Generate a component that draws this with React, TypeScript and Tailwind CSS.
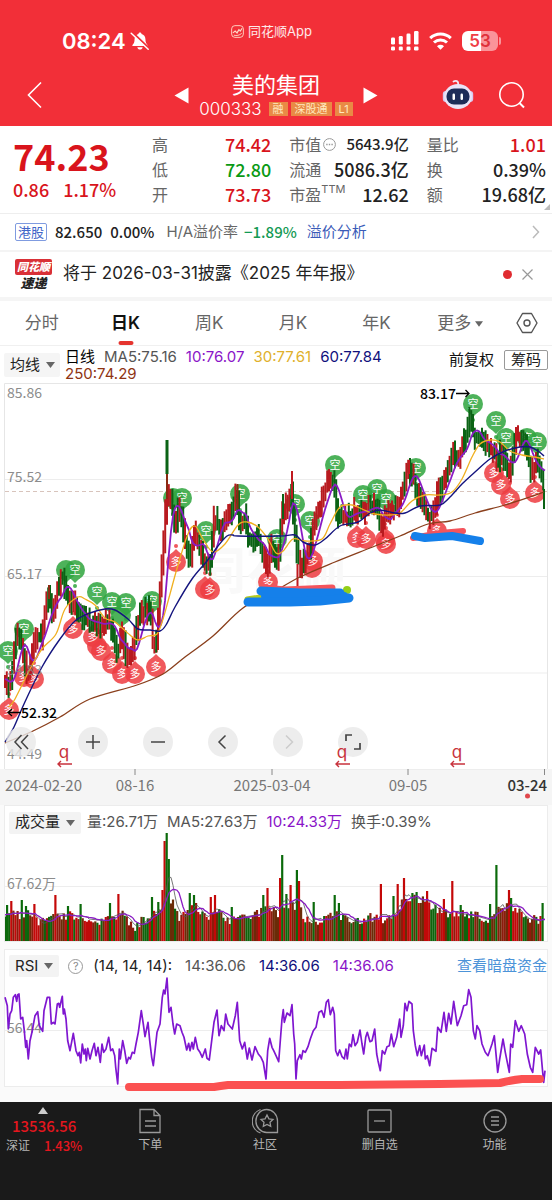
import React from "react";

type Pt = [number, number];

const CJK = "font-['Inter','Noto_Sans_CJK_SC',sans-serif]";
const DIN = "font-['Noto_Sans_CJK_SC',sans-serif]";

/* ---------- chart data ---------- */

const price: Pt[] = [
  [5, 680], [8, 690], [12, 678], [14, 660], [18, 630], [23, 650], [28, 676], [31, 665], [33, 650], [37, 637], [42, 640],
  [46, 612], [49, 596], [53, 613], [58, 592], [63, 577], [67, 595], [72, 605], [74, 603], [80, 618], [87, 622], [97, 624],
  [103, 627], [108, 620], [113, 632], [118, 656], [123, 635], [127, 660], [133, 652], [137, 630], [142, 610], [145, 615],
  [148, 608], [152, 625], [154, 650], [157, 640], [160, 600], [163, 560], [165, 535], [167, 495], [171, 492], [174, 515],
  [176, 532], [178, 508], [182, 520], [185, 540], [188, 554], [191, 558], [194, 533], [197, 542], [202, 553], [205, 562],
  [208, 568], [211, 564], [213, 543], [215, 515], [218, 523], [222, 530], [227, 517], [230, 519], [233, 515], [237, 492],
  [239, 520], [242, 530], [245, 517], [248, 537], [252, 545], [257, 538], [262, 550], [265, 560], [268, 573], [270, 548],
  [275, 557], [279, 564], [282, 515], [287, 507], [292, 490], [294, 515], [297, 550], [301, 567], [307, 557], [310, 550],
  [315, 523], [320, 510], [325, 493], [330, 478], [335, 487], [337, 510], [340, 521], [347, 517], [354, 513], [362, 513],
  [372, 507], [378, 510], [381, 530], [385, 520], [390, 513], [395, 510], [400, 503], [405, 483], [409, 468], [414, 480],
  [419, 497], [424, 507], [429, 518], [435, 510], [439, 493], [445, 483], [454, 453], [458, 460], [465, 443], [471, 418],
  [475, 440], [485, 443], [492, 450], [499, 463], [502, 450], [509, 475], [513, 460], [516, 440], [520, 440], [525, 442],
  [529, 460], [533, 475], [537, 463], [544, 480],
];

const ma30: Pt[] = [
  [9, 708], [15, 700], [30, 670], [42, 650], [56, 635], [65, 610], [78, 598], [85, 600], [95, 606], [105, 619], [115, 623],
  [130, 636], [138, 641], [148, 637], [157, 635], [163, 620], [170, 595], [178, 566], [188, 535], [195, 527], [203, 540],
  [213, 553], [225, 545], [238, 526], [247, 523], [258, 528], [268, 540], [276, 554], [283, 552], [293, 540], [305, 542],
  [322, 540], [330, 525], [340, 508], [352, 506], [362, 510], [375, 515], [390, 516], [400, 514], [412, 502], [425, 496],
  [440, 496], [452, 493], [462, 480], [472, 458], [480, 445], [490, 441], [500, 443], [510, 452], [522, 456], [535, 458], [544, 460],
];

const ma60: Pt[] = [
  [5, 743], [14, 728], [24, 705], [42, 668], [60, 640], [75, 622], [90, 614], [105, 610], [115, 611], [128, 620], [138, 630],
  [150, 631], [160, 632], [166, 626], [175, 608], [192, 580], [207, 562], [218, 547], [227, 537], [233, 536], [238, 537],
  [280, 537], [295, 536], [303, 543], [315, 546], [325, 540], [340, 527], [358, 523], [370, 514], [380, 511], [395, 514],
  [405, 514], [420, 507], [440, 506], [450, 498], [462, 485], [475, 473], [490, 460], [505, 452], [520, 448], [530, 448],
  [538, 452], [544, 457],
];

const ma250: Pt[] = [
  [5, 744], [33, 732], [60, 718], [90, 700], [137, 686], [163, 675], [185, 658], [213, 637], [243, 609], [275, 592],
  [300, 578], [335, 563], [370, 549], [400, 537], [428, 525], [450, 522], [475, 514], [505, 506], [530, 498], [544, 493],
];

const shortMarks: Pt[] = [
  [8, 652], [24, 630], [75, 571], [112, 603], [97, 593], [126, 604], [152, 602], [182, 499],
  [206, 532], [240, 495], [277, 540], [295, 505], [310, 522], [335, 466], [363, 496], [377, 490], [386, 500], [416, 469],
  [473, 405], [496, 422], [506, 439], [527, 439], [537, 443],
];

const longMarks: Pt[] = [
  [9, 711], [24, 678], [34, 680], [73, 630], [93, 638], [101, 652], [112, 665], [122, 675], [135, 675], [156, 668],
  [176, 563], [210, 591], [268, 583], [313, 562], [357, 539], [366, 540], [386, 545], [437, 532],
  [494, 474], [501, 486], [510, 500], [535, 494],
];

const hiddenShort: Pt[] = [[66, 571], [121, 616], [173, 499]];
const hiddenLong: Pt[] = [[97, 647], [205, 590], [312, 569], [385, 541]];

const volumeBase: Pt[] = [
  [5, 916], [30, 916], [40, 926], [50, 918], [70, 917], [85, 920], [105, 922], [115, 917], [125, 917], [133, 929], [150, 917],
  [160, 912], [168, 893], [173, 905], [180, 920], [195, 908], [205, 919], [218, 912], [228, 923], [240, 918], [260, 915],
  [272, 908], [280, 916], [290, 906], [300, 910], [308, 924], [325, 920], [340, 916], [355, 924], [370, 919], [380, 920],
  [390, 920], [400, 906], [408, 900], [420, 902], [430, 905], [440, 914], [450, 917], [470, 916], [490, 922], [500, 910],
  [515, 908], [525, 920], [545, 923],
];

const volumeSpikes: Pt[] = [
  [7, 906], [12, 902], [21, 901], [27, 907], [34, 905], [56, 896], [68, 907], [81, 905], [111, 904], [119, 895], [152, 898],
  [159, 903], [163, 891], [165, 842], [167, 834], [169, 860], [190, 894], [194, 896], [210, 898], [215, 896], [231, 908],
  [263, 896], [268, 889], [281, 879], [283, 856], [287, 895], [291, 886], [296, 871], [298, 882], [314, 903], [335, 896],
  [339, 904], [380, 885], [393, 897], [398, 885], [403, 879], [405, 877], [413, 894], [417, 893], [427, 892], [444, 900],
  [453, 882], [460, 906], [491, 905], [497, 866], [510, 891], [512, 899], [543, 904],
];

const risingSpikes = [56, 119, 163, 165, 268, 281, 291, 298, 380, 398, 403, 405, 427, 444, 453, 510, 215, 210, 12, 34];

const rsiLeft: Pt[] = [
  [15, 160], [22, 185], [25, 255], [30, 210], [35, 200], [40, 160], [46, 152], [50, 172], [53, 152], [57, 150], [62, 225],
  [68, 220], [73, 260], [77, 310], [80, 290], [85, 345], [90, 290], [97, 260], [105, 215], [113, 203], [118, 245], [128, 262],
  [132, 200], [142, 160], [149, 160], [154, 240], [160, 235], [165, 240], [172, 180], [176, 178], [179, 190], [187, 157],
  [190, 210], [193, 195], [198, 225], [203, 290], [210, 320], [220, 268], [228, 320], [234, 335], [238, 325], [242, 357],
  [247, 300], [252, 330], [256, 315], [259, 350], [263, 313], [270, 345], [276, 320], [283, 298], [288, 335], [294, 310],
  [301, 355], [306, 300], [311, 325], [318, 315], [326, 280], [332, 320], [338, 315], [344, 335], [347, 370], [353, 420],
  [358, 315], [361, 345], [368, 290], [374, 320], [380, 358], [386, 340], [391, 345], [397, 325], [403, 328], [408, 300],
  [415, 265], [424, 200], [430, 240], [435, 278], [444, 235], [449, 290], [455, 340], [460, 365], [465, 320], [471, 265],
  [480, 240], [487, 160], [491, 138], [495, 150], [501, 102], [507, 205], [513, 190], [519, 240], [524, 270], [530, 240],
  [540, 245], [546, 265], [552, 280], [560, 318], [566, 298], [570, 320], [576, 295], [580, 315], [586, 280], [593, 315],
  [600, 325], [607, 340], [616, 315], [621, 343], [628, 348], [635, 290], [642, 235], [651, 198], [657, 275], [664, 245],
  [672, 260], [677, 210], [684, 240], [697, 255], [706, 215], [712, 175], [719, 290], [727, 315], [734, 295], [742, 345],
  [748, 312], [756, 348], [765, 308], [775, 330], [783, 340], [790, 355], [798, 405], [803, 320], [809, 283],
];

const rsiRight: Pt[] = [
  [0, 310], [5, 320], [12, 335], [20, 353], [25, 290], [30, 225], [34, 197], [37, 235], [45, 207], [54, 215], [60, 182],
  [65, 270], [68, 300], [72, 405], [76, 350], [84, 332], [88, 345], [93, 320], [100, 325], [108, 308], [115, 285], [124, 260],
  [132, 250], [141, 205], [149, 200], [156, 220], [163, 175], [169, 167], [175, 212], [182, 190], [187, 210], [191, 320],
  [197, 335], [203, 318], [210, 338], [217, 345], [222, 315], [226, 345], [232, 300], [238, 308], [243, 272], [249, 305],
  [256, 295], [264, 258], [270, 300], [275, 330], [281, 280], [286, 265], [294, 293], [300, 290], [308, 255], [314, 330],
  [318, 350], [325, 380], [331, 320], [338, 330], [345, 308], [352, 305], [358, 270], [365, 308], [374, 280], [383, 225],
  [387, 280], [394, 245], [399, 178], [405, 200], [411, 172], [420, 180], [424, 260], [430, 305], [436, 335], [443, 305],
  [448, 335], [457, 303], [460, 345], [466, 335], [473, 365], [480, 313], [492, 322], [497, 250], [507, 265], [516, 205],
  [523, 262], [530, 208], [537, 240], [545, 172], [556, 245], [567, 215], [575, 185], [584, 182], [590, 137], [597, 160],
  [604, 260], [610, 285], [615, 245], [623, 260], [630, 300], [640, 325], [648, 335], [660, 300], [667, 275], [677, 385],
  [683, 345], [693, 285], [700, 325], [712, 385], [716, 300], [722, 310], [730, 230], [740, 262], [748, 245], [758, 270],
  [766, 330], [775, 370], [782, 385], [790, 310], [800, 330], [806, 318], [812, 385], [815, 415], [819, 380],
];

const rsi: Pt[] = [
  ...rsiLeft.map(([x, y]): Pt => [x / 3, y / 3 + 945]),
  ...rsiRight.map(([x, y]): Pt => [x / 3 + 272, y / 3 + 945]),
];

/* ---------- helpers ---------- */

const rand = (i: number) => {
  const s = Math.sin(i * 127.1 + 11.7) * 43758.5453;
  return s - Math.floor(s);
};

const at = (pts: Pt[], x: number) => {
  if (x <= pts[0][0]) return pts[0][1];
  for (let i = 1; i < pts.length; i++) {
    if (x <= pts[i][0]) {
      const [x0, y0] = pts[i - 1];
      const [x1, y1] = pts[i];
      return y0 + ((y1 - y0) * (x - x0)) / (x1 - x0);
    }
  }
  return pts[pts.length - 1][1];
};

const line = (pts: Pt[]) => pts.map(([x, y], i) => `${i ? "L" : "M"}${x.toFixed(1)} ${y.toFixed(1)}`).join("");

const curve = (p: Pt[]) => {
  let d = `M${p[0][0]} ${p[0][1]}`;
  for (let i = 0; i < p.length - 1; i++) {
    const a = p[Math.max(0, i - 1)];
    const b = p[i];
    const c = p[i + 1];
    const e = p[Math.min(p.length - 1, i + 2)];
    d += `C${b[0] + (c[0] - a[0]) / 6} ${b[1] + (c[1] - a[1]) / 6} ${c[0] - (e[0] - b[0]) / 6} ${c[1] - (e[1] - b[1]) / 6} ${c[0]} ${c[1]}`;
  }
  return d;
};

const average = (f: (x: number) => number, back: number) => {
  const out: Pt[] = [];
  for (let x = 5; x <= 545; x += 2) {
    let s = 0;
    for (let k = 0; k <= back; k++) s += f(Math.max(5, x - k));
    out.push([x, s / (back + 1)]);
  }
  return out;
};

const candles = Array.from({ length: 300 }, (_, i) => {
  const x = 5 + i * 1.8;
  const a = at(price, x - 1);
  const b = at(price, x + 1);
  const falling = at(price, x + 2) > at(price, x - 2);
  const shift = (rand(i) - 0.5) * 5;
  return {
    x,
    top: Math.min(a, b) + shift - 4 - rand(i + 900) * 9,
    bottom: Math.max(a, b) + shift + 4 + rand(i + 1300) * 9,
    green: rand(i + 400) < (falling ? 0.72 : 0.28),
  };
});

const volume = Array.from({ length: 257 }, (_, i) => {
  const x = 5 + i * 2.1;
  const r = rand(i + 50);
  const spike = volumeSpikes.find(([sx]) => Math.abs(sx - x) < 1.05);
  const y = spike ? spike[1] : at(volumeBase, x) + (r - 0.55) * 10;
  const c = rand(i + 777);
  const up = spike ? risingSpikes.includes(spike[0]) : false;
  const fill = spike ? (up ? "#c40808" : "#0b6a0b") : c < 0.34 ? "#c00a0a" : c < 0.55 ? "#8c1c0c" : c < 0.8 ? "#6b2c08" : "#0e640c";
  return { x, y, fill };
});

const volAt = (x: number) => {
  const s = volumeSpikes.find(([sx]) => Math.abs(sx - x) < 1);
  return s ? s[1] : at(volumeBase, x);
};

function Mark({ x, y, long, plain }: { x: number; y: number; long?: boolean; plain?: boolean }) {
  const s = long ? -1 : 1;
  const fill = long ? "#ee3d42" : "#31a640";
  return (
    <g opacity="0.86">
      <path d={`M${x - 5} ${y + 8 * s}L${x} ${y + 13 * s}L${x + 5} ${y + 8 * s}Z`} fill={fill} />
      <circle cx={x} cy={y} r="10" fill={fill} />
      <circle cx={x} cy={y + 16 * s} r="2" fill={fill} />
      {!plain && (
        <text x={x} y={y + 4} textAnchor="middle" fill="#fff" className="text-[11px]">
          {long ? "多" : "空"}
        </text>
      )}
    </g>
  );
}

/* ---------- sections ---------- */

function StatusBar() {
  return (
    <div className="grid grid-cols-[1fr_auto_1fr] items-center pt-[23px] pr-[51px] pl-[42px]">
      <div className="flex h-9 items-center gap-1 pl-5">
        <span className="text-[22px] leading-6 font-semibold">08:24</span>
        <svg width="20" height="20" viewBox="0 0 20 20" aria-label="静音">
          <path d="M10 1.5c.9 0 1.5.6 1.5 1.400 2.400.6 3.900 2.600 3.900 5.100 0 3.600 1.100 4.800 2.100 5.900.4.5.1 1.100-.5 1.100H3c-.6 0-.9-.6-.5-1.100 1-1.100 2.100-2.300 2.100-5.900 0-2.500 1.500-4.500 3.900-5.100 0-.8.6-1.400 1.500-1.400Z" fill="#fff" />
          <path d="M7.300 16.200h5.400c-.3 1.500-1.400 2.300-2.700 2.300s-2.400-.8-2.700-2.300Z" fill="#fff" />
          <path d="M2.200 1.200 19 17.200" stroke="#f22f38" strokeWidth="2.200" />
          <path d="M1.200 2.200 18.200 18.200" stroke="#fff" strokeWidth="1.500" strokeLinecap="round" />
        </svg>
      </div>
      <div className="flex items-center gap-1 pb-5 text-[13px] leading-4 text-white/90">
        <svg width="13" height="13" viewBox="0 0 14 14" fill="none" stroke="#ffd9c8">
          <rect x="0.700" y="0.700" width="12.600" height="12.600" rx="3.500" />
          <path d="M2 8.500 4.500 6.500 6.500 8.500 8.500 5 10 6.500 12 3.500" strokeWidth="1.300" />
          <path d="M3 11c3 .8 6 .2 8.500-2" />
        </svg>
        <span>同花顺App</span>
      </div>
      <div className="flex items-center justify-end gap-[10px]">
        <svg width="28" height="20" viewBox="0 0 28 20" fill="#fff" aria-label="信号">
          <rect x="0" y="6.500" width="4" height="7" rx="1.200" />
          <rect x="7.800" y="5" width="4" height="8.500" rx="1.200" />
          <rect x="15.500" y="2.500" width="4" height="11" rx="1.200" />
          <rect x="23" y="0" width="4.500" height="13.500" rx="1.200" />
          <rect x="0" y="15.500" width="4" height="4" rx="1.200" />
          <rect x="7.800" y="15.500" width="4" height="4" rx="1.200" />
          <rect x="15.500" y="15.500" width="4" height="4" rx="1.200" />
          <rect x="23" y="15.500" width="4.500" height="4" rx="1.200" />
        </svg>
        <svg width="23" height="18" viewBox="0 0 23 18" fill="none" stroke="#fff" strokeWidth="3" aria-label="无线网络">
          <path d="M1.200 6.200C7 .6 16 .6 21.800 6.200" />
          <path d="M5 10.500c3.700-3.400 9.300-3.400 13 0" />
          <path d="M8 14.200 11.500 17.800 15 14.200c-2-1.800-5-1.800-7 0Z" fill="#fff" stroke="none" />
        </svg>
        <div className="flex items-center gap-px">
          <div className="flex h-5 w-9 items-center justify-center rounded-[6px] bg-[linear-gradient(90deg,#fff_53%,#fa9499_53%)] text-[17px] leading-5 font-semibold">
            <span className="text-[#ef3e46]">5</span>
            <span className="text-[#e0313b]">3</span>
          </div>
          <span className="h-2 w-[2px] rounded-r-full bg-[#fa9499]" />
        </div>
      </div>
    </div>
  );
}

function TitleBar() {
  return (
    <div className="grid grid-cols-[1fr_auto_1fr] items-center px-6 pt-3 pb-[7px]">
      <button type="button" aria-label="返回" className="w-6">
        <svg width="22" height="30" viewBox="0 0 22 30" fill="none" stroke="#fff" strokeWidth="1.600">
          <path d="M17 2.500 4.500 15 17 27.500" />
        </svg>
      </button>
      <div className="flex items-center gap-[10px]">
        <button type="button" aria-label="上一只">
          <svg width="15" height="17" viewBox="0 0 15 17">
            <path d="M0.500 8.500 14.500 0.500v16Z" fill="#fff" />
          </svg>
        </button>
        <div className="flex flex-col items-center">
          <h1 className="text-[22px] leading-7">美的集团</h1>
          <div className="flex items-center gap-[3px] leading-5">
            <span className="mr-1 text-[17px] font-light">000333</span>
            <span className="bg-[#e98a45] px-1 text-[11px] leading-[14px] text-[#ffe9c0]">融</span>
            <span className="bg-[#e98a45] px-1 text-[11px] leading-[14px] text-[#ffe9c0]">深股通</span>
            <span className="bg-[#e98a45] px-1 text-[11px] leading-[14px] text-[#ffe9c0]">L1</span>
          </div>
        </div>
        <button type="button" aria-label="下一只">
          <svg width="15" height="17" viewBox="0 0 15 17">
            <path d="M14.500 8.500.5.500v16Z" fill="#fff" />
          </svg>
        </button>
      </div>
      <div className="flex items-center justify-end gap-6 pr-[2px]">
        <button type="button" aria-label="智能助手">
          <svg width="32" height="32" viewBox="0 0 32 32">
            <path d="M11.500 2.500c2.500-1.500 5-.5 4.800 3" fill="none" stroke="#f3e5f2" strokeWidth="1.800" strokeLinecap="round" />
            <rect x="0.800" y="12" width="6" height="11" rx="3" fill="#d9c9f0" />
            <rect x="25.200" y="12" width="6" height="11" rx="3" fill="#d9c9f0" />
            <ellipse cx="16" cy="17.500" rx="14" ry="12.500" fill="#e9e4f8" />
            <rect x="4.500" y="9.500" width="23" height="16" rx="7.500" fill="#1d2c58" />
            <rect x="10.500" y="14.500" width="2.500" height="6.500" rx="1.200" fill="#fff" />
            <rect x="18.500" y="14.500" width="2.500" height="6.500" rx="1.200" fill="#fff" />
          </svg>
        </button>
        <button type="button" aria-label="搜索">
          <svg width="28" height="28" viewBox="0 0 28 28" fill="none" stroke="#fff" strokeWidth="1.600">
            <circle cx="13.500" cy="13.500" r="11.700" />
            <path d="M21.500 22 26 26.500" strokeWidth="2" />
          </svg>
        </button>
      </div>
    </div>
  );
}

function Stat({ label, value, tone, small }: { label: React.ReactNode; value: string; tone: string; small?: boolean }) {
  return (
    <div className="flex h-[25px] items-center justify-between whitespace-nowrap">
      <dt className="flex items-center text-base text-[#666]">{label}</dt>
      <dd className={`${DIN} font-medium ${small ? "text-[15px]" : "text-[18px]"} ${tone}`}>{value}</dd>
    </div>
  );
}

const RED = "text-[#d9141c]";
const GREEN = "text-[#0a9a14]";
const BLACK = "text-[#222]";

function Quote() {
  return (
    <section className="relative grid grid-cols-[121px_1fr_1fr_1fr] gap-x-[18px] bg-white pt-[6px] pr-[6px] pb-[6px] pl-[13px]">
      <div className={`${DIN} ${RED}`}>
        <p className="pt-px text-[36px] leading-[44px] font-bold">74.23</p>
        <p className="flex gap-[14px] text-[18px] leading-6 font-medium">
          <span>0.86</span>
          <span>1.17%</span>
        </p>
      </div>
      <dl>
        <Stat label="高" value="74.42" tone={RED} />
        <Stat label="低" value="72.80" tone={GREEN} />
        <Stat label="开" value="73.73" tone={RED} />
      </dl>
      <dl>
        <Stat
          label={
            <>
              市值
              <svg width="13" height="13" viewBox="0 0 13 13" fill="none" stroke="#999" className="ml-[2px]">
                <circle cx="6.500" cy="6.500" r="5.900" />
                <path d="M3.200 6.500h1.400M5.800 6.500h1.400M8.400 6.500h1.400" strokeWidth="1.300" />
              </svg>
            </>
          }
          value="5643.9亿"
          tone={BLACK}
          small
        />
        <Stat label="流通" value="5086.3亿" tone={BLACK} />
        <Stat label={<>市盈<sup className="text-[11px]">TTM</sup></>} value="12.62" tone={BLACK} />
      </dl>
      <dl>
        <Stat label="量比" value="1.01" tone={RED} />
        <Stat label="换" value="0.39%" tone={BLACK} />
        <Stat label="额" value="19.68亿" tone={BLACK} />
      </dl>
      <svg width="6" height="6" viewBox="0 0 6 6" className="absolute right-[2px] bottom-[3px]">
        <path d="M6 0v6H0Z" fill="#bbb" />
      </svg>
    </section>
  );
}

function HongKong() {
  return (
    <section className="flex h-[37px] items-center border-t border-[#eee] bg-white pr-3 pl-[15px] text-[15px]">
      <span className="mr-2 rounded-[2px] border border-[#7f9be0] px-[2px] text-[13px] leading-4 text-[#4166c8]">港股</span>
      <span className={`${DIN} mr-2 text-[15px] font-medium ${BLACK}`}>82.650</span>
      <span className={`${DIN} mr-3 text-[15px] font-medium ${BLACK}`}>0.00%</span>
      <span className="mr-[6px] text-[#666]">H/A溢价率</span>
      <span className={`${DIN} mr-[10px] text-[15px] font-medium text-[#139a54]`}>−1.89%</span>
      <a href="#premium" className="text-[#3a5bb8]">溢价分析</a>
      <svg width="8" height="14" viewBox="0 0 8 14" fill="none" stroke="#bbb" strokeWidth="1.500" className="ml-auto">
        <path d="M1 1 6.500 7 1 13" />
      </svg>
    </section>
  );
}

function News() {
  return (
    <section className="flex h-[47px] items-center border-t-2 border-[#f4f4f4] bg-white pr-[19px] pl-[15px]">
      <div className="mr-[11px] flex w-[37px] flex-col items-center font-black italic">
        <span className="flex h-4 w-full items-center justify-center rounded-[2px] bg-[#d93037] text-[11px] leading-4 text-white">同花顺</span>
        <span className="text-[13px] leading-4 text-[#222]">速递</span>
      </div>
      <p className="pb-px text-[17px] text-[#222]">将于 2026-03-31披露《2025 年年报》</p>
      <span className="mr-[10px] ml-auto size-[9px] rounded-full bg-[#e02b30]" />
      <button type="button" aria-label="关闭">
        <svg width="11" height="11" viewBox="0 0 11 11" stroke="#999" strokeWidth="1.200">
          <path d="M.5.500 10.500 10.500M10.500.500.5 10.500" />
        </svg>
      </button>
    </section>
  );
}

function Caret({ small }: { small?: boolean }) {
  return (
    <svg width={small ? 8 : 9} height="6" viewBox="0 0 9 6">
      <path d="M0 0h9L4.500 6Z" fill="#666" />
    </svg>
  );
}

function PeriodTabs() {
  return (
    <nav className="flex h-[49px] items-center border-t-4 border-b border-t-[#f5f5f5] border-b-[#f0f0f0] bg-white pr-[14px] text-[17px] text-[#666]">
      {["分时", "日K", "周K", "月K", "年K"].map((t) => (
        <button
          key={t}
          type="button"
          className={t === "日K" ? "relative h-full flex-1 pt-[2px] font-semibold text-[#111]" : "h-full flex-1 pt-[2px]"}
        >
          {t}
          {t === "日K" && <span className="absolute bottom-0 left-1/2 h-1 w-[15px] -translate-x-1/2 rounded-full bg-[#e5342f]" />}
        </button>
      ))}
      <button type="button" className="flex h-full flex-1 items-center justify-center gap-1 pt-[2px]">
        更多
        <Caret small />
      </button>
      <button type="button" aria-label="设置" className="ml-[14px]">
        <svg width="22" height="22" viewBox="0 0 22 22" fill="none" stroke="#555" strokeWidth="1.400">
          <path d="M6.500 1.500h9L21 11l-5.500 9.500h-9L1 11Z" strokeLinejoin="round" />
          <circle cx="11" cy="11" r="3" />
        </svg>
      </button>
    </nav>
  );
}

function AverageLegend() {
  return (
    <div className="flex h-[37px] items-start bg-white pr-1 pl-1 text-[15px] leading-[18px]">
      <button type="button" className="mt-[7px] mr-[5px] flex h-6 shrink-0 items-center gap-[6px] rounded-[2px] bg-[#f5f5f5] pr-[5px] pl-[6px] text-[#222]">
        均线
        <Caret />
      </button>
      <div className="flex flex-1 flex-wrap gap-x-[9px] pt-[2px] leading-[17px]">
        <span className="text-black">日线</span>
        <span className="text-[#555]">MA5:75.16</span>
        <span className="text-[#8a14c8]">10:76.07</span>
        <span className="text-[#e0b02c]">30:77.61</span>
        <span className="text-[#10107c]">60:77.84</span>
        <span className="basis-full text-[#8e3413]">250:74.29</span>
      </div>
      <button type="button" className="mt-1 mr-[10px] h-5 text-[#111]">前复权</button>
      <button type="button" className="mt-1 h-5 rounded-[2px] border border-[#999] px-[6px] leading-4 text-[#222]">筹码</button>
    </div>
  );
}

const TOOL = "flex size-[30px] items-center justify-center rounded-full bg-[#e9e9e9]/80";

function PriceChart() {
  return (
    <section className="relative bg-white">
      <svg viewBox="0 384 552 422" className="block w-full overflow-visible" fill="none">
        <rect x="0" y="770" width="552" height="36" fill="#f5f5f5" />
        <path d="M4.500 770V384.500H547.500V770" stroke="#e6e6e6" />
        <path d="M5 480.500H547M5 577.500H547M5 674H547M5 770.500H547" stroke="#ededed" />
        <text x="196" y="590" fill="#f9f9f9" className="text-[50px] font-bold">同花顺</text>
        <path d="M5 492.500H547" stroke="#d8c4bc" strokeDasharray="4 3" />
        {hiddenLong.map(([x, y], i) => <Mark key={i} x={x} y={y} long plain />)}
        {hiddenShort.map(([x, y], i) => <Mark key={i} x={x} y={y} plain />)}
        {longMarks.map(([x, y], i) => <Mark key={i} x={x} y={y} long />)}
        {shortMarks.map(([x, y], i) => <Mark key={i} x={x} y={y} />)}
        {candles.map((c, i) => (
          <path key={i} d={`M${c.x} ${c.top}V${c.bottom}`} stroke={c.green ? "#0b6315" : "#b81a1f"} strokeWidth="2" />
        ))}
        <path d="M167 441V475" stroke="#0b6315" strokeWidth="3" />
        <path d="M167 475V500M237.500 485V510M49 586V600" stroke="#8a2a12" strokeWidth="2" />
        <path d="M292 472V500M297.500 565V588M409 461V475M516 428V450" stroke="#c01a20" strokeWidth="2" />
        <path d="M283 495V520M544 490V510" stroke="#0b6315" strokeWidth="2" />
        <path d={line(average((x) => at(price, x), 11))} stroke="#8a1cc4" strokeWidth="1.800" />
        <path d={curve(ma30)} stroke="#f0b020" strokeWidth="1.300" />
        <path d={curve(ma60)} stroke="#14147e" strokeWidth="1.400" />
        <path d={curve(ma250)} stroke="#8a3f1c" strokeWidth="1.300" />

        <g strokeLinecap="round" strokeLinejoin="round">
          <path d="M265 589 285 591 332 589" stroke="#f4545c" strokeWidth="7" />
          <circle cx="347" cy="591" r="4" fill="#94cf18" />
          <path d="M247 600 260 598" stroke="#b5cc20" strokeWidth="5" />
          <path d="M261 592 300 594 340 594" stroke="#1580ea" strokeWidth="9" />
          <path d="M265 597H344" stroke="#1580ea" strokeWidth="8" />
          <path d="M248 603 290 603 320 602 349 599" stroke="#1580ea" strokeWidth="9" />
          <path d="M413 539 440 534 463 532" stroke="#f4545c" strokeWidth="6" />
          <path d="M415 537 425 539 452 537 480 542" stroke="#1580ea" strokeWidth="8" />
        </g>

        <g fill="#8c8c8c" className="font-['Noto_Sans_CJK_SC',sans-serif] text-[14px]">
          <text x="7" y="399">85.86</text>
          <text x="7" y="483">75.52</text>
          <text x="7" y="580">65.17</text>
          <text x="7" y="676" opacity="0.8">54.83</text>
          <text x="7" y="760">44.49</text>
        </g>
        <g fill="#777" className="font-['Noto_Sans_CJK_SC',sans-serif] text-[15px]">
          <text x="5" y="792">2024-02-20</text>
          <text x="135" y="792" textAnchor="middle">08-16</text>
          <text x="272" y="792" textAnchor="middle">2025-03-04</text>
          <text x="408" y="792" textAnchor="middle">09-05</text>
          <text x="547" y="792" textAnchor="end" fill="#333" className="font-medium">03-24</text>
        </g>
        <g fill="#000" className="font-['Noto_Sans_CJK_SC',sans-serif] text-[14px] font-medium">
          <text x="21" y="719">52.32</text>
          <text x="456" y="400" textAnchor="end">83.17</text>
        </g>
        <path d="M21 713.500H8M12 710 8 713.500 12 717M456 394.500H469M465.500 391 469 394.500 465.500 398" stroke="#000" strokeWidth="1.300" />
        <path d="M135 770V776M272 770V776M408 770V776M544.500 770V776" stroke="#888" />
        <circle cx="527.500" cy="797" r="2.500" fill="#e0474c" />
      </svg>

      <div className="absolute top-[344px] left-[6px] flex gap-[35px]">
        <button type="button" aria-label="收起" className={`${TOOL} mr-[7px]`}>
          <svg width="16" height="18" viewBox="0 0 16 18" fill="none" stroke="#444" strokeWidth="1.500">
            <path d="M8.500 2 2 9l6.500 7M15 2 8.500 9 15 16" />
          </svg>
        </button>
        <button type="button" aria-label="放大" className={TOOL}>
          <svg width="16" height="16" viewBox="0 0 16 16" stroke="#444" strokeWidth="1.500"><path d="M1 8h14M8 1v14" /></svg>
        </button>
        <button type="button" aria-label="缩小" className={TOOL}>
          <svg width="16" height="16" viewBox="0 0 16 16" stroke="#444" strokeWidth="1.500"><path d="M1 8h14" /></svg>
        </button>
        <button type="button" aria-label="左移" className={TOOL}>
          <svg width="16" height="16" viewBox="0 0 16 16" fill="none" stroke="#444" strokeWidth="1.500"><path d="M10.500 1.500 4 8l6.500 6.500" /></svg>
        </button>
        <button type="button" aria-label="右移" className={TOOL}>
          <svg width="16" height="16" viewBox="0 0 16 16" fill="none" stroke="#ccc" strokeWidth="1.500"><path d="M6 1.500 12.500 8 6 14.500" /></svg>
        </button>
        <button type="button" aria-label="全屏" className={TOOL}>
          <svg width="16" height="16" viewBox="0 0 16 16" fill="none" stroke="#444" strokeWidth="1.700"><path d="M1 7V1h6M15 9v6H9" /></svg>
        </button>
      </div>

      <svg viewBox="0 384 552 422" className="pointer-events-none absolute inset-0 w-full" fill="none">
        {[64, 342, 457].map((x) => (
          <g key={x}>
            <text x={x} y="759" textAnchor="middle" fill="#c8323c" className="text-[17px]">q</text>
            <path d={`M${x + 8} 765H${x - 6}M${x - 3} 762L${x - 6} 765L${x - 3} 768`} stroke="#c8323c" strokeWidth="1.400" />
          </g>
        ))}
      </svg>
    </section>
  );
}

function VolumeChart() {
  return (
    <section className="mx-1 border border-[#ececec] bg-white">
      <div className="flex h-[33px] items-center text-[15px] text-[#555]">
        <button type="button" className="mr-[6px] ml-1 flex h-[22px] items-center gap-[6px] rounded-[2px] bg-[#f3f3f3] px-[6px] text-[#222]">
          成交量
          <Caret />
        </button>
        <span className="mr-[9px]">量:26.71万</span>
        <span className="mr-[9px]">MA5:27.63万</span>
        <span className="mr-[9px] text-[#8a14c8]">10:24.33万</span>
        <span>换手:0.39%</span>
      </div>
      <svg viewBox="5 832 542 110" className="-mt-2 block w-full" fill="none">
        <path d="M5 887.500H547" stroke="#ededed" />
        {volume.map((v, i) => (
          <path key={i} d={`M${v.x} ${v.y}V942`} stroke={v.fill} strokeWidth="2.200" />
        ))}
        <path d={line(average(volAt, 7))} stroke="#555" strokeWidth="0.800" />
        <path d={line(average(volAt, 14))} stroke="#8a1cc4" strokeWidth="1.300" />
        <text x="7" y="890" fill="#8c8c8c" className="font-['Noto_Sans_CJK_SC',sans-serif] text-[14px]">67.62万</text>
      </svg>
    </section>
  );
}

function RsiChart() {
  return (
    <section className="relative mx-1 mt-[7px] border border-[#ececec] bg-white">
      <div className="flex h-8 items-center text-[15px]">
        <button type="button" className="ml-1 flex h-[22px] items-center gap-[6px] rounded-[2px] bg-[#f3f3f3] px-[6px] text-[#222]">
          RSI
          <Caret />
        </button>
        <button type="button" aria-label="说明" className="mr-[10px] ml-[9px] flex size-[15px] items-center justify-center rounded-full border border-[#999] text-[11px] text-[#888]">?</button>
        <span className="mr-[13px] text-[#222]">(14, 14, 14):</span>
        <span className="mr-[13px] text-[#555]">14:36.06</span>
        <span className="mr-[13px] text-[#10107c]">14:36.06</span>
        <span className="text-[#8a14c8]">14:36.06</span>
        <a href="#flow" className="ml-auto text-[#4c93d8]">查看暗盘资金</a>
      </div>
      <svg viewBox="5 977 542 110" className="-mt-[6px] block w-full overflow-visible" fill="none">
        <path d="M5 1031.500H547" stroke="#ededed" />
        <text x="7" y="1034" fill="#8c8c8c" className="font-['Noto_Sans_CJK_SC',sans-serif] text-[14px]">56.44</text>
        <path d={line(rsi)} stroke="#7f16d0" strokeWidth="1.700" strokeLinejoin="round" />
        <path
          d="M129 1088H214Q220 1087 228 1086L340 1086 440 1085 500 1084Q512 1081 522 1080H540"
          stroke="#fb5151"
          strokeWidth="8"
          strokeLinecap="round"
          strokeLinejoin="round"
        />
      </svg>
    </section>
  );
}

function Footer() {
  const item = "flex flex-1 flex-col items-center gap-[3px] pt-[6px] text-[12px] leading-4 text-[#b5b5b5]";
  return (
    <footer className="mt-[15px] flex flex-1 items-start bg-[#1a1a1a] pb-4">
      <button type="button" className="flex w-[93px] shrink-0 flex-col pt-[5px] pl-[6px] text-left">
        <svg width="10" height="7" viewBox="0 0 10 7" className="ml-8"><path d="M5 0 10 7H0Z" fill="#ccc" /></svg>
        <span className={`${DIN} ml-[6px] text-[15px] leading-6 font-medium text-[#e5161e]`}>13536.56</span>
        <span className="flex items-center gap-[14px] text-[12px] leading-4 text-[#b5b5b5]">
          深证
          <span className={`${DIN} text-[13px] font-medium text-[#e5161e]`}>1.43%</span>
        </span>
      </button>
      <button type="button" className={item}>
        <svg width="24" height="26" viewBox="0 0 24 26" fill="none" stroke="#999" strokeWidth="1.300">
          <path d="M2 1.500h14l6 6V24.500H2ZM16 1.500v6h6M7 13h11M7 18h11" />
        </svg>
        下单
      </button>
      <button type="button" className={item}>
        <svg width="27" height="26" viewBox="0 0 27 26" fill="none" stroke="#999" strokeWidth="1.300">
          <path d="M25.500 24.500V13A10.800 11.500 0 1 0 15 24.500Z" />
          <path d="M8.500 1.500A12.500 12.500 0 0 0 8.500 25" />
          <path d="m15 7 1.900 3.800 4.100.6-3 2.900.7 4.100-3.700-1.900-3.700 1.900.7-4.100-3-2.900 4.100-.6Z" />
        </svg>
        社区
      </button>
      <button type="button" className={item}>
        <svg width="25" height="26" viewBox="0 0 25 26" fill="none" stroke="#999" strokeWidth="1.300">
          <rect x="1" y="2" width="23" height="22" rx="1" />
          <path d="M7 13h11" />
        </svg>
        删自选
      </button>
      <button type="button" className={item}>
        <svg width="24" height="26" viewBox="0 0 24 26" fill="none" stroke="#999" strokeWidth="1.300">
          <circle cx="12" cy="13" r="11" />
          <path d="M8 9h8M8 13h8M8 17h8" />
        </svg>
        功能
      </button>
    </footer>
  );
}

export default function App() {
  return (
    <main className={`${CJK} flex min-h-screen flex-col bg-[#fafafa] text-[#222]`}>
      <header className="bg-[#f22f38] text-white">
        <StatusBar />
        <TitleBar />
      </header>
      <Quote />
      <HongKong />
      <News />
      <PeriodTabs />
      <AverageLegend />
      <PriceChart />
      <VolumeChart />
      <RsiChart />
      <Footer />
    </main>
  );
}
